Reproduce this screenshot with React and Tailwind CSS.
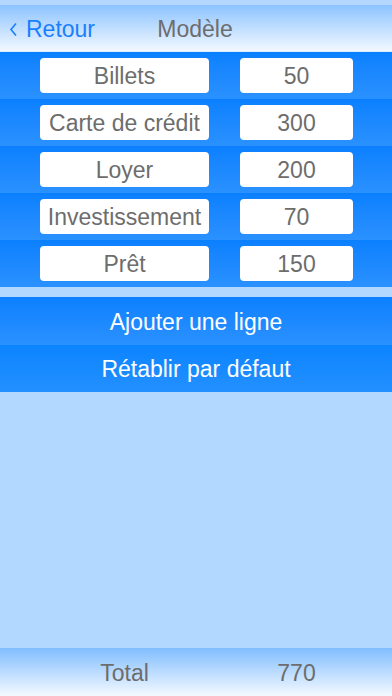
import React from 'react';

const rows = [
  { label: 'Billets', value: 50 },
  { label: 'Carte de crédit', value: 300 },
  { label: 'Loyer', value: 200 },
  { label: 'Investissement', value: 70 },
  { label: 'Prêt', value: 150 },
];

const App = () => {
  const total = rows.reduce((s, r) => s + r.value, 0);
  return (
    <div className='w-[392px] h-[696px] flex flex-col bg-[#b3d8ff] overflow-hidden' style={{ fontFamily: '"Liberation Sans", Arial, sans-serif' }}>
      {/* header */}
      <div className='h-[5px] bg-[#b3d7ff]' />
      <div className='relative h-[47px] flex items-center justify-center bg-gradient-to-b from-[#8cc3ff] to-[#f2f8ff] border-b border-[#dbeaff]'>
        <div className='absolute left-[9px] top-0 bottom-0 flex items-center text-[#1a7fff] text-[23px] pt-[2px]'>
          <svg width='9' height='15' viewBox='0 0 9 15' className='mr-[8px]'>
            <path d='M7 1.5 L2 7.5 L7 13.5' fill='none' stroke='#1a7fff' strokeWidth='1.6' />
          </svg>
          Retour
        </div>
        <span className='text-[#6d6d6d] text-[23px] -ml-[2px] pt-[2px]'>Modèle</span>
      </div>

      {/* lines */}
      <div className='flex flex-col'>
        {rows.map((r) => (
          <div key={r.label} className='h-[47px] flex items-center bg-gradient-to-b from-[#0a80ff] to-[#2a91ff]'>
            <div className='ml-[40px] w-[169px] h-[35px] pt-[2px] bg-white rounded-[4px] flex items-center justify-center text-[#6d6d6d] text-[23px] whitespace-nowrap'>
              {r.label}
            </div>
            <div className='ml-[31px] w-[113px] h-[35px] pt-[2px] bg-white rounded-[4px] flex items-center justify-center text-[#6d6d6d] text-[23px]'>
              {r.value}
            </div>
          </div>
        ))}
      </div>

      <div className='h-[10px]' />

      <div className='h-[48px] pt-[2px] flex items-center justify-center text-white text-[23px] bg-gradient-to-b from-[#0a80ff] to-[#2a91ff]'>
        Ajouter une ligne
      </div>
      <div className='h-[47px] pt-[2px] flex items-center justify-center text-white text-[23px] bg-gradient-to-b from-[#0a84ff] to-[#2290ff]'>
        Rétablir par défaut
      </div>

      <div className='flex-1' />

      {/* footer */}
      <div className='h-[48px] pt-[2px] flex items-center bg-gradient-to-b from-[#80bdff] to-[#f4f9ff]'>
        <div className='ml-[40px] w-[169px] text-center text-[#6d6d6d] text-[23px]'>Total</div>
        <div className='ml-[31px] w-[113px] text-center text-[#6d6d6d] text-[23px]'>{total}</div>
      </div>
    </div>
  );
};

export default App;
